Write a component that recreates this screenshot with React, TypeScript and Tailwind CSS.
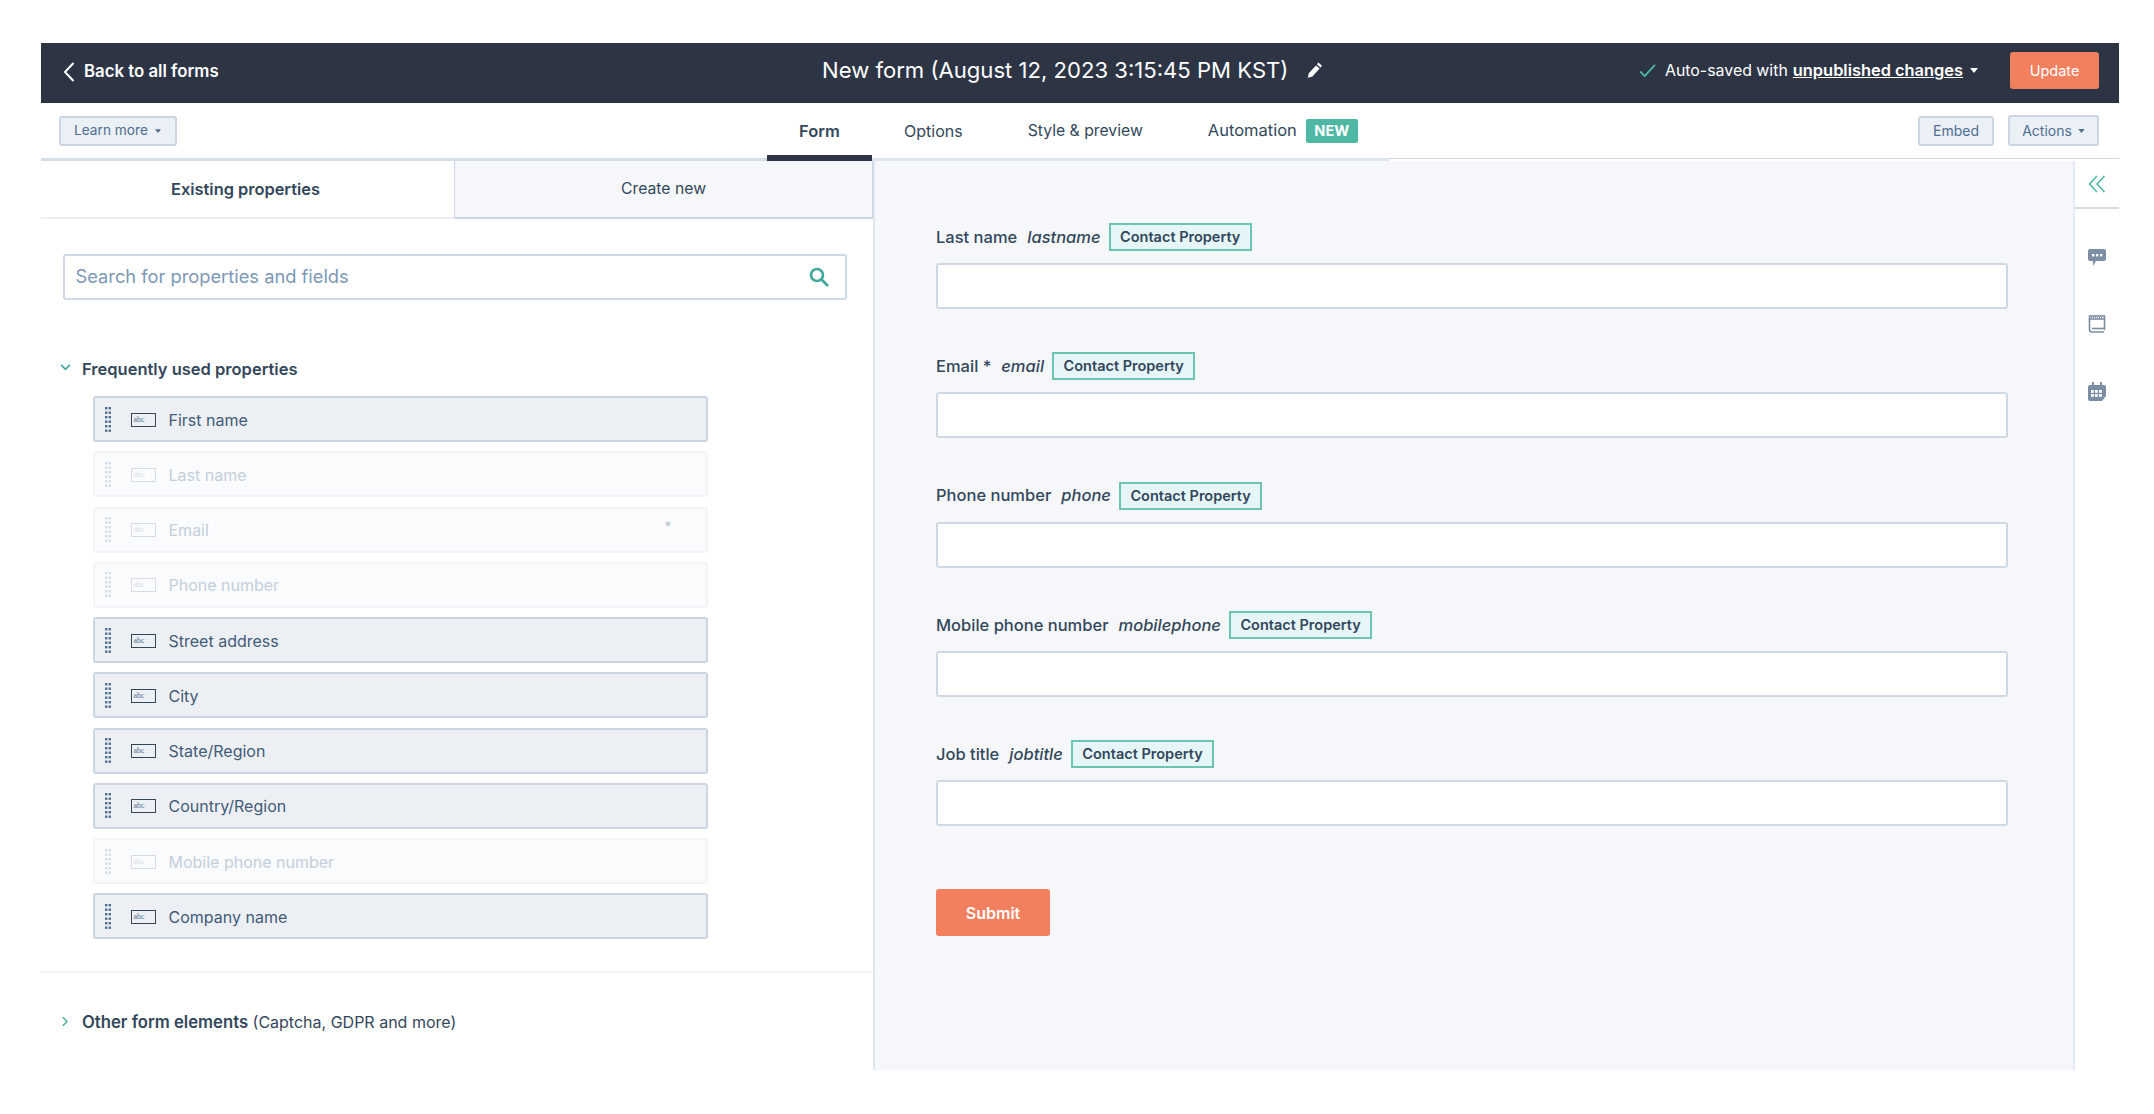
const properties = [
  { name: 'First name', used: false },
  { name: 'Last name', used: true },
  { name: 'Email', used: true, required: true },
  { name: 'Phone number', used: true },
  { name: 'Street address', used: false },
  { name: 'City', used: false },
  { name: 'State/Region', used: false },
  { name: 'Country/Region', used: false },
  { name: 'Mobile phone number', used: true },
  { name: 'Company name', used: false },
];

const fields = [
  { label: 'Last name', name: 'lastname' },
  { label: 'Email *', name: 'email' },
  { label: 'Phone number', name: 'phone' },
  { label: 'Mobile phone number', name: 'mobilephone' },
  { label: 'Job title', name: 'jobtitle' },
];

function Caret({ className }: { className: string }) {
  return (
    <svg viewBox="0 0 8 5" className={className} fill="currentColor">
      <path d="M0 0h8L4 5z" />
    </svg>
  );
}

function DragDots({ faded }: { faded: boolean }) {
  const ys = [0, 4.5, 9, 13.5, 18, 22.5];
  return (
    <svg viewBox="0 0 6 25" className="w-[6px] h-[25px] shrink-0" fill={faded ? '#d5dee8' : '#516f90'}>
      {ys.map((y) => (
        <g key={y}>
          <rect x="0" y={y} width="2.4" height="2.4" />
          <rect x="3.6" y={y} width="2.4" height="2.4" />
        </g>
      ))}
    </svg>
  );
}

function AbcIcon({ faded }: { faded: boolean }) {
  return (
    <div
      className={`w-[25px] h-[14px] border-[1.5px] flex items-center pl-[2px] text-[8px] leading-none font-['Liberation_Serif',serif] ${
        faded ? 'border-[#d5dee8] text-[#d5dee8]' : 'border-[#33475b] text-[#516f90]'
      }`}
    >
      abc
    </div>
  );
}

function PropertyRow({ name, used, required }: { name: string; used: boolean; required?: boolean }) {
  return (
    <div
      className={`h-[46px] w-[615px] rounded-[3px] border-2 flex items-center pl-[10px] ${
        used ? 'bg-[#fafbfc] border-[#f2f5f8] text-[#c3cfdb]' : 'bg-[#ecf0f5] border-[#cbd6e2] text-[#425b76]'
      }`}
    >
      <DragDots faded={used} />
      <div className="ml-[20px] mt-[1px]">
        <AbcIcon faded={used} />
      </div>
      <span className="ml-[13px] mt-[1px] text-[16px]">{name}</span>
      {required && <span className="ml-auto mr-[34px] mb-[6px] text-[14px] leading-none text-[#b5c3d1]">*</span>}
    </div>
  );
}

function FormField({ label, name }: { label: string; name: string }) {
  return (
    <div className="flex flex-col gap-[12px]">
      <div className="h-[28px] flex items-center text-[16.500px] text-[#33475b]">
        <span className="font-medium">{label}</span>
        <span className="ml-[10px] italic font-medium">{name}</span>
        <span className="ml-[8px] h-[28px] px-[9.500px] flex items-center border-2 border-[#6cc5b2] bg-[#e5f5f8] text-[14.500px] font-semibold">
          Contact Property
        </span>
      </div>
      <div className="h-[46px] w-[1071.500px] bg-white border-2 border-[#cfd9e5] rounded-[3px]" />
    </div>
  );
}

export default function App() {
  return (
    <div className="w-[2154px] h-[1114px] bg-white pl-[41px] pt-[43px] font-[Inter,sans-serif] text-[#33475b]">
      <div className="w-[2078px]">
        <header className="h-[60px] pb-[5px] bg-[#2d3545] flex items-center text-white">
          <div className="w-[781px] flex items-center pl-[22px] mt-[2px]">
            <svg viewBox="0 0 12 20" className="w-[12px] h-[20px]" fill="none" stroke="white" strokeWidth="2">
              <path d="M10.5 1L2 10l8.5 9" />
            </svg>
            <span className="ml-[9px] text-[16.800px] font-semibold">Back to all forms</span>
          </div>
          <span className="text-[22.100px] whitespace-nowrap">New form (August 12, 2023 3:15:45 PM KST)</span>
          <svg viewBox="0 0 16 16" className="ml-[19px] mb-[2px] w-[16px] h-[16px]" fill="white">
            <path d="M11.4 0.6l3.6 3.2-1.5 1.7-3.6-3.2zM9 3.4l3.6 3.2L5.4 14.5 0.8 15.8l1-4.6z" />
          </svg>
          <div className="ml-auto flex items-center">
            <svg viewBox="0 0 18 14" className="w-[17px] h-[13px]" fill="none" stroke="#4fb8a4" strokeWidth="2">
              <path d="M1 8l5 5L17 1" />
            </svg>
            <span className="ml-[9px] text-[15.900px]">Auto-saved with</span>
            <span className="ml-[5px] text-[16.400px] font-semibold underline">unpublished changes</span>
            <Caret className="ml-[7px] w-[8px] h-[5px] text-white" />
            <button className="ml-[32px] mr-[20px] w-[89px] h-[37px] rounded-[3px] bg-[#f2805f] text-white text-[14.500px]">
              Update
            </button>
          </div>
        </header>

        <div className="h-[58px] flex items-stretch">
          <div className="w-[726px] border-b-[3px] border-[#d5dee8] pl-[17.500px] flex items-center">
            <button className="h-[30px] w-[118px] rounded-[3px] bg-[#eaf0f6] border-2 border-[#cbd6e2] text-[#506e91] text-[13.700px] flex items-center justify-center gap-[7px]">
              Learn more
              <Caret className="w-[6px] h-[4px]" />
            </button>
          </div>
          <div className="w-[105px] border-b-[6px] border-[#2d3545] flex items-center justify-center pt-[4px] text-[16.500px] font-semibold">
            Form
          </div>
          <div className="px-[32px] border-b-[3px] border-[#dfe6ee] flex items-center text-[16px]">Options</div>
          <div className="px-[33px] border-b-[3px] border-[#dfe6ee] flex items-center text-[15.750px]">
            Style &amp; preview
          </div>
          <div className="px-[32px] border-b-[3px] border-[#dfe6ee] flex items-center text-[16.500px]">
            Automation
            <span className="ml-[9px] w-[52px] h-[24px] rounded-[2px] bg-[#4fb8a4] text-white text-[14.500px] font-bold flex items-center justify-center">
              NEW
            </span>
          </div>
          <div className="flex-1 mb-[2px] border-b border-[#cbd6e2] flex items-center justify-end pr-[20px] gap-[14px] text-[#506e91] text-[14px]">
            <button className="h-[30px] w-[76px] rounded-[3px] bg-[#eaf0f6] border-2 border-[#cbd6e2]">Embed</button>
            <button className="h-[31px] w-[91px] rounded-[3px] bg-[#eaf0f6] border-2 border-[#cbd6e2] flex items-center justify-center gap-[6px]">
              Actions
              <Caret className="w-[7px] h-[4px]" />
            </button>
          </div>
        </div>

        <div className="h-[909px] flex">
          <aside className="w-[834px] shrink-0 border-r-2 border-[#dfe6ee] flex flex-col">
            <div className="h-[58px] flex">
              <div className="w-[413px] pr-[4px] border-b-2 border-[#eaf0f6] flex items-center justify-center font-semibold text-[16.400px]">
                Existing properties
              </div>
              <div className="flex-1 bg-[#f5f7fa] border-x border-b-2 border-[#cbd6e2] flex items-center justify-center text-[15.750px]">
                Create new
              </div>
            </div>

            <div className="mt-[35px] ml-[21.500px] w-[784px] h-[46px] border-2 border-[#cfd9e5] rounded-[3px] flex items-center pl-[11px] pr-[16px]">
              <span className="text-[18.300px] text-[#7c98b6]">Search for properties and fields</span>
              <svg viewBox="0 0 20 20" className="ml-auto w-[20px] h-[20px]" fill="none" stroke="#3ea99a" strokeWidth="2.6">
                <circle cx="8" cy="8" r="6" />
                <path d="M12.5 12.5L19 19" />
              </svg>
            </div>

            <div className="mt-[57px] ml-[19px] flex items-center h-[24px]">
              <svg viewBox="0 0 12 8" className="w-[11px] h-[7px] mb-[3px]" fill="none" stroke="#3ea99a" strokeWidth="2">
                <path d="M1 1l5 5 5-5" />
              </svg>
              <span className="ml-[11px] mt-[1px] text-[16.500px] font-semibold">Frequently used properties</span>
            </div>

            <div className="mt-[15px] ml-[51.500px] flex flex-col gap-[9.250px]">
              {properties.map((p) => (
                <PropertyRow key={p.name} {...p} />
              ))}
            </div>

            <div className="mt-[32px] border-t-2 border-[#eff3f7]" />

            <div className="mt-[37px] ml-[21px] flex items-center h-[24px]">
              <svg viewBox="0 0 7 12" className="w-[6px] h-[11px] mb-[2px]" fill="none" stroke="#3ea99a" strokeWidth="1.6">
                <path d="M1 1l5 5-5 5" />
              </svg>
              <span className="ml-[14px] text-[16px]">
                <span className="font-semibold text-[16.700px]">Other form elements</span> (Captcha, GDPR and more)
              </span>
            </div>
          </aside>

          <main className="flex-1 bg-[#f5f7fa] pl-[61px] pt-[62px]">
            <div className="flex flex-col gap-[43.300px]">
              {fields.map((f) => (
                <FormField key={f.name} {...f} />
              ))}
            </div>
            <button className="mt-[63px] w-[114px] h-[47px] rounded-[3px] bg-[#f2805f] text-white text-[16px] font-semibold">
              Submit
            </button>
          </main>

          <div className="w-[46px] shrink-0 bg-white border-l-2 border-[#e3e9f0] flex flex-col items-center">
            <div className="w-full h-[48px] border-b-2 border-[#d5dee8] flex items-center justify-center">
              <svg viewBox="0 0 18 18" className="w-[18px] h-[18px]" fill="none" stroke="#4fb8a4" strokeWidth="1.6">
                <path d="M9 1L1.5 9 9 17M16.5 1L9 9l7.5 8" />
              </svg>
            </div>
            <svg viewBox="0 0 18 17" className="mt-[40px] w-[18px] h-[17px]" fill="#7c8ea3">
              <path d="M2 0h14a2 2 0 012 2v8a2 2 0 01-2 2H8l-3 5v-5H2a2 2 0 01-2-2V2a2 2 0 012-2z" />
              <rect x="4" y="5" width="2.4" height="2.4" fill="white" />
              <rect x="8" y="5" width="2.4" height="2.4" fill="white" />
              <rect x="12" y="5" width="2.4" height="2.4" fill="white" />
            </svg>
            <svg viewBox="0 0 18 18" className="mt-[49px] w-[18px] h-[18px]" fill="none" stroke="#7c8ea3" strokeWidth="1.6">
              <path d="M1.5 4V14.5c0 1.5 1 2.5 2.500 2.500H16" />
              <path d="M16.500 4V15" />
              <rect x="1.500" y="1" width="15" height="3" />
              <path d="M3 2.500H15" strokeDasharray="1 1" />
              <path d="M4 13.500H16.500" />
            </svg>
            <svg viewBox="0 0 18 19" className="mt-[49px] w-[18px] h-[19px]">
              <path d="M2 3h14a2 2 0 012 2v9l-4 5H2a2 2 0 01-2-2V5a2 2 0 012-2z" fill="#7c8ea3" />
              <rect x="4" y="0" width="2" height="4" fill="#7c8ea3" />
              <rect x="12" y="0" width="2" height="4" fill="#7c8ea3" />
              {[3, 7, 11].map((x) =>
                [8, 12].map((y) => <rect key={`${x}-${y}`} x={x} y={y} width="2.800" height="2.800" fill="white" />),
              )}
            </svg>
          </div>
        </div>
      </div>
    </div>
  );
}
